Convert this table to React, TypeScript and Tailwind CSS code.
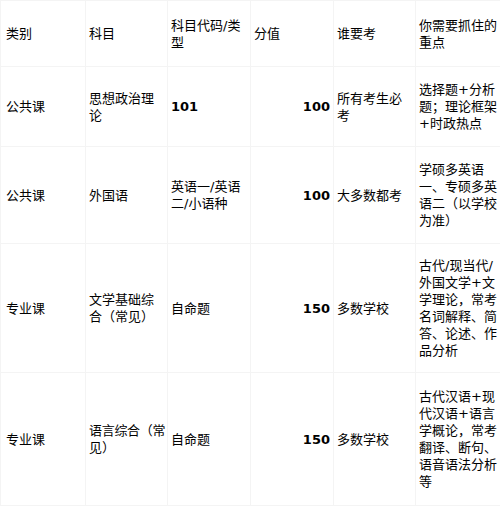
import type { ReactNode } from 'react';

type Row = {
  h: string;
  cat: string;
  subject: ReactNode;
  code: string;
  codeBold: boolean;
  score: string;
  who: string;
  focus: string;
};

const rows: Row[] = [
  {
    h: 'h-[80px]',
    cat: '公共课',
    subject: '思想政治理论',
    code: '101',
    codeBold: true,
    score: '100',
    who: '所有考生必考',
    focus: '选择题+分析题；理论框架+时政热点',
  },
  {
    h: 'h-[97px]',
    cat: '公共课',
    subject: '外国语',
    code: '英语一/英语二/小语种',
    codeBold: false,
    score: '100',
    who: '大多数都考',
    focus: '学硕多英语一、专硕多英语二（以学校为准）',
  },
  {
    h: 'h-[129px]',
    cat: '专业课',
    subject: '文学基础综合（常见）',
    code: '自命题',
    codeBold: false,
    score: '150',
    who: '多数学校',
    focus: '古代/现当代/外国文学+文学理论，常考名词解释、简答、论述、作品分析',
  },
  {
    h: 'h-[133px]',
    cat: '专业课',
    subject: (
      <>
        <span className="whitespace-nowrap tracking-[-0.3px]">语言综合（常</span>
        <br />
        见）
      </>
    ),
    code: '自命题',
    codeBold: false,
    score: '150',
    who: '多数学校',
    focus: '古代汉语+现代汉语+语言学概论，常考翻译、断句、语音语法分析等',
  },
];

const cell = 'border border-[#f4f4f4] align-middle px-[3px]';

export default function App() {
  return (
    <div className="w-[500px] h-[506px] bg-white overflow-hidden text-black text-[13px] leading-[17px] font-['DejaVu_Sans','Noto_Sans_CJK_SC',sans-serif]">
      <table className="w-[500px] table-fixed border-collapse">
        <colgroup>
          <col className="w-[85px]" />
          <col className="w-[82px]" />
          <col className="w-[83px]" />
          <col className="w-[83px]" />
          <col className="w-[82px]" />
          <col className="w-[85px]" />
        </colgroup>
        <thead>
          <tr className="h-[66px]">
            <th className={`${cell} pl-[5px] text-left font-normal`}>类别</th>
            <th className={`${cell} text-left font-normal`}>科目</th>
            <th className={`${cell} text-left font-normal`}>科目代码/类型</th>
            <th className={`${cell} text-left font-normal`}>分值</th>
            <th className={`${cell} text-left font-normal`}>谁要考</th>
            <th className={`${cell} text-left font-normal`}>你需要抓住的重点</th>
          </tr>
        </thead>
        <tbody>
          {rows.map((r, i) => (
            <tr key={i} className={r.h}>
              <td className={`${cell} pl-[5px]`}>{r.cat}</td>
              <td className={cell}>{r.subject}</td>
              <td className={`${cell} ${r.codeBold ? 'font-bold' : ''}`}>{r.code}</td>
              <td className={`${cell} text-right font-bold`}>{r.score}</td>
              <td className={cell}>{r.who}</td>
              <td className={cell}>{r.focus}</td>
            </tr>
          ))}
        </tbody>
      </table>
    </div>
  );
}
